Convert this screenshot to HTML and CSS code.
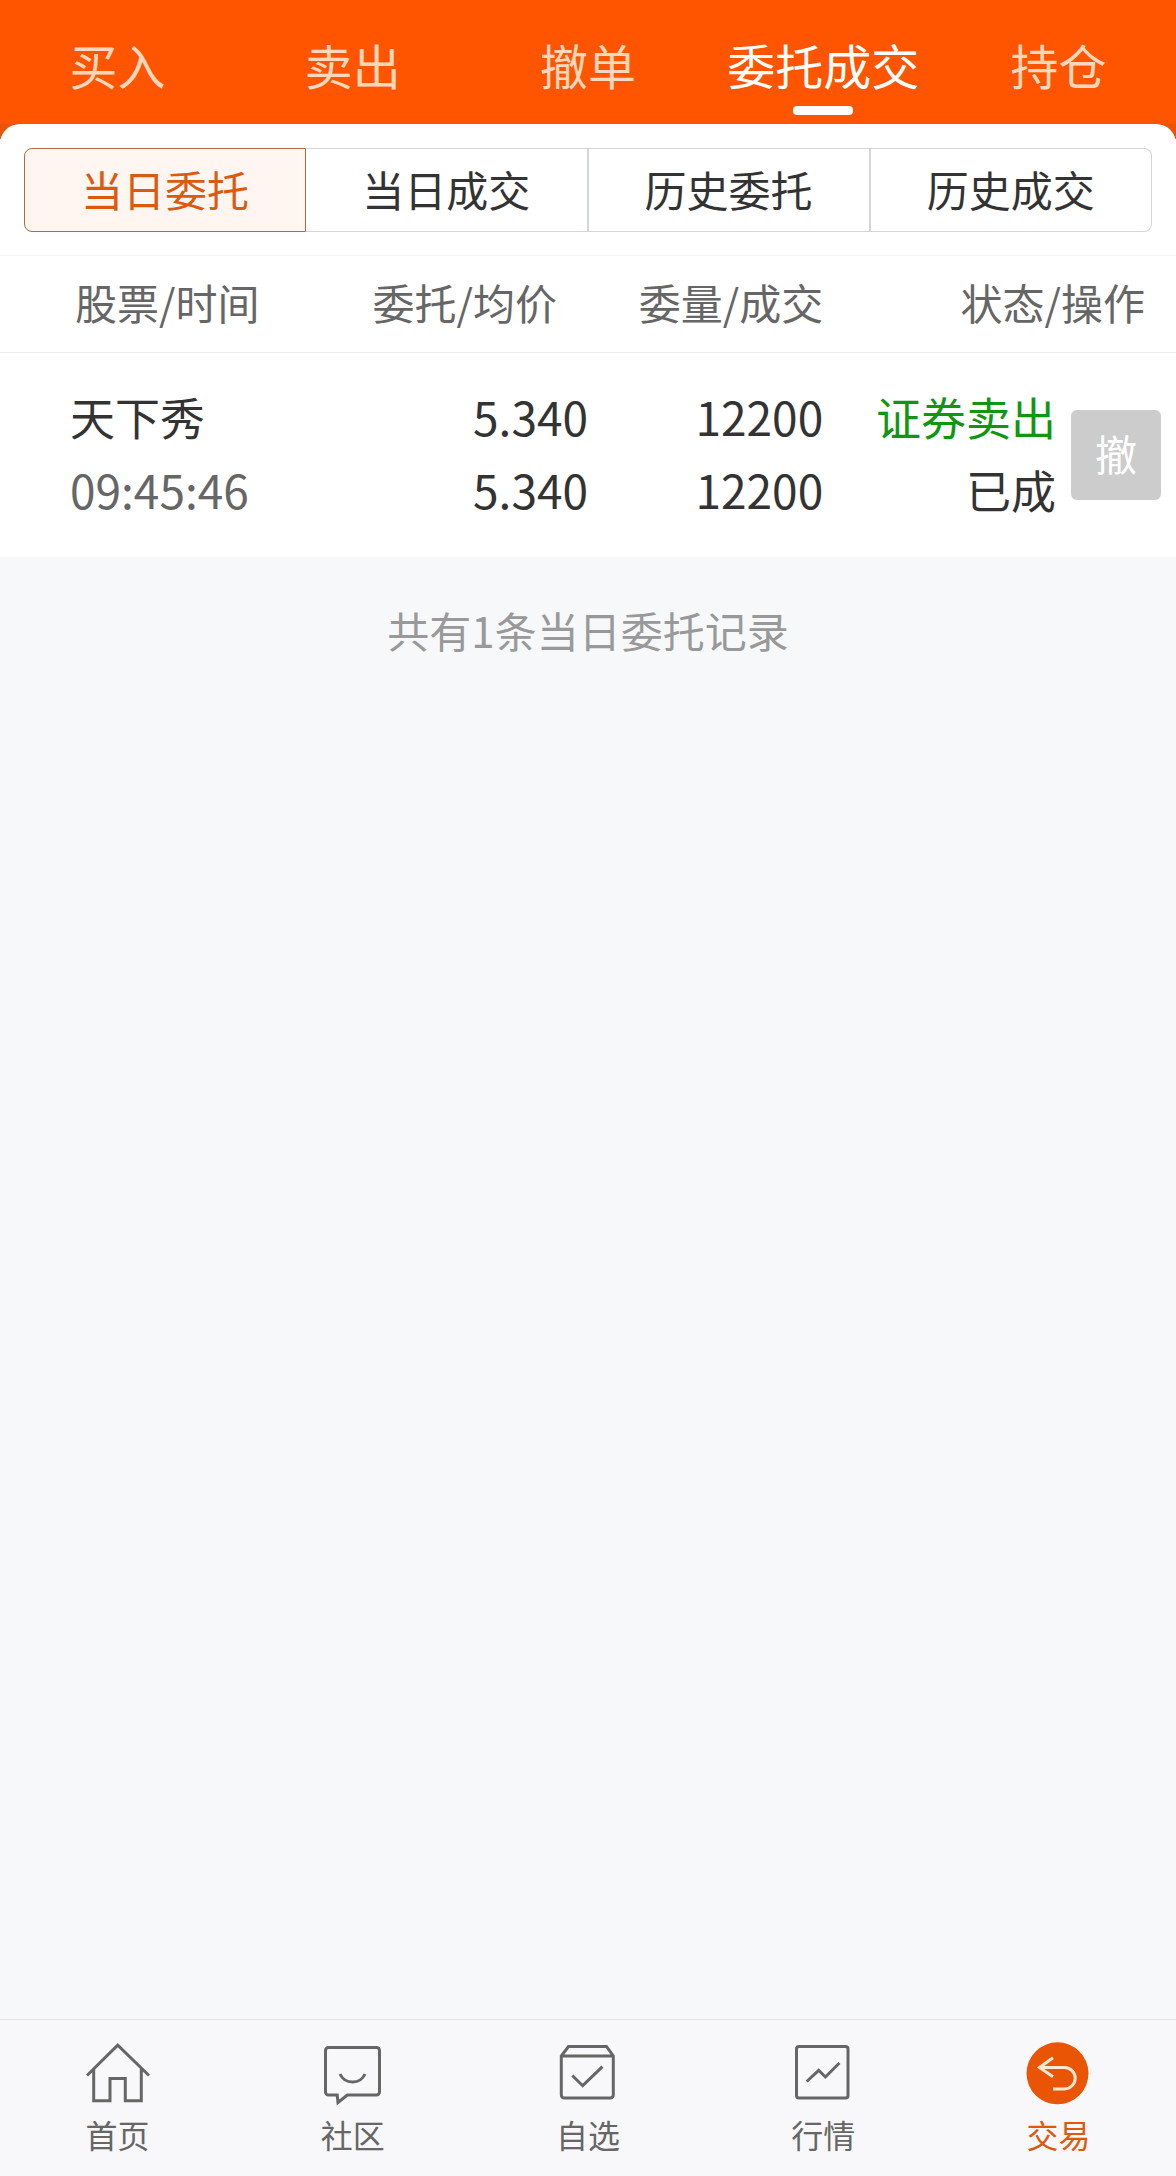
FILE: index.html
```html
<!DOCTYPE html>
<html lang="zh-CN">
<head>
<meta charset="utf-8">
<meta name="viewport" content="width=device-width, initial-scale=1">
<title>委托成交</title>
<link rel="stylesheet" href="styles.css">
</head>
<body>
<div class="app">
  <nav class="top-tabs">
    <a class="top-tab" href="#buy">买入</a>
    <a class="top-tab" href="#sell">卖出</a>
    <a class="top-tab" href="#cancel">撤单</a>
    <a class="top-tab is-active" href="#orders" aria-current="page">委托成交</a>
    <a class="top-tab" href="#positions">持仓</a>
  </nav>

  <main class="content">
    <div class="panel-wrap">
      <div class="segments">
        <button class="segment is-active" type="button">当日委托</button>
        <button class="segment" type="button">当日成交</button>
        <button class="segment" type="button">历史委托</button>
        <button class="segment" type="button">历史成交</button>
      </div>
    </div>

    <table class="orders">
      <colgroup>
        <col class="col-stock">
        <col class="col-price">
        <col class="col-amount">
        <col class="col-status">
        <col class="col-action">
      </colgroup>
      <thead>
        <tr>
          <th class="th-stock">股票/时间</th>
          <th class="th-price">委托/均价</th>
          <th>委量/成交</th>
          <th class="th-status" colspan="2">状态/操作</th>
        </tr>
      </thead>
      <tbody>
        <tr>
          <td class="td-stock"><div>天下秀</div><div class="num time">09:45:46</div></td>
          <td class="num"><div>5.340</div><div>5.340</div></td>
          <td class="num"><div>12200</div><div>12200</div></td>
          <td><div class="sell">证券卖出</div><div>已成</div></td>
          <td class="td-action"><button class="cancel" type="button">撤</button></td>
        </tr>
      </tbody>
    </table>

    <p class="summary">共有1条当日委托记录</p>
  </main>

  <nav class="bottom-nav">
    <a class="nav-item" href="#home">
      <svg class="icon" viewBox="0 0 64 64" aria-hidden="true">
        <path d="M1 33.5 31.7 3.2 63 33.5M7.7 27v31.7H24V36.5h15.3v22.2h16V27"/>
      </svg>
      <span>首页</span>
    </a>
    <a class="nav-item" href="#community">
      <svg class="icon" viewBox="0 0 64 64" aria-hidden="true">
        <path d="M7.5 5.5h48a3 3 0 0 1 3 3V50a3 3 0 0 1-3 3H26.3L17 60.5 16.2 53H7.5a3 3 0 0 1-3-3V8.5a3 3 0 0 1 3-3zM19 32c2.5 5.5 7.5 8 12.7 8S41.5 37.5 44 32"/>
      </svg>
      <span>社区</span>
    </a>
    <a class="nav-item" href="#watchlist">
      <svg class="icon" viewBox="0 0 64 64" aria-hidden="true">
        <path d="M5.3 14 12.5 4.5h38L57.3 14v39a3 3 0 0 1-3 3h-46a3 3 0 0 1-3-3zM5.3 14h52M16.3 33.5l10.400 10.200 19.800-19"/>
      </svg>
      <span>自选</span>
    </a>
    <a class="nav-item" href="#market">
      <svg class="icon" viewBox="0 0 64 64" aria-hidden="true">
        <rect x="5.5" y="4.5" width="51.5" height="51.5" rx="2.5"/>
        <path d="M15.7 39.5l12-11.2 6.700 6.700 14-14"/>
      </svg>
      <span>行情</span>
    </a>
    <a class="nav-item is-active" href="#trade" aria-current="page">
      <svg class="icon" viewBox="0 0 64 64" aria-hidden="true">
        <circle class="disc" cx="31.5" cy="31.3" r="31"/>
        <path class="arrow" d="M27 15.7 13.5 25.5 27 34.7M13.5 25.5H38.5a10.7 10.7 0 0 1 0 21.4H27"/>
      </svg>
      <span>交易</span>
    </a>
  </nav>
</div>
</body>
</html>
```

FILE: styles.css
```css
* {
  box-sizing: border-box;
}

body {
  margin: 0;
  background: #f7f8fa;
  color: #333;
  font-family: "Noto Sans CJK SC", sans-serif;
}

a {
  color: inherit;
  text-decoration: none;
}

button {
  font-family: inherit;
  padding: 0;
}

.app {
  display: flex;
  flex-direction: column;
  min-height: 100vh;
}

/* Top tabs */
.top-tabs {
  display: flex;
  height: 124px;
  background: #ff5500;
}

.top-tab {
  position: relative;
  flex: 1;
  padding-top: 28px;
  color: #ffd7bd;
  font-size: 48px;
  line-height: 72px;
  text-align: center;
  white-space: nowrap;
}

.top-tab.is-active {
  color: #fff;
}

.top-tab.is-active::after {
  content: "";
  position: absolute;
  left: 50%;
  bottom: 9px;
  width: 60px;
  height: 9px;
  margin-left: -30px;
  border-radius: 4px;
  background: #fff;
}

/* Segmented filter */
.content {
  flex: 1;
}

.panel-wrap {
  background: linear-gradient(#e8540a 15px, #fff 15px);
}

.segments {
  display: flex;
  padding: 24px 24px 23px;
  border-radius: 20px 20px 0 0;
  background: #fff;
}

.segment {
  flex: 1;
  height: 84px;
  padding-bottom: 3px;
  border: 1px solid #d3d6d8;
  border-right-width: 2px;
  border-left-width: 0;
  background: #fff;
  color: #333;
  font-size: 42px;
  line-height: 60px;
}

.segment:first-child {
  border-right-width: 1px;
  border-left-width: 1px;
  border-radius: 8px 0 0 8px;
}

.segment:last-child {
  border-right-width: 1px;
  border-radius: 0 8px 8px 0;
}

.segment.is-active {
  border-color: #b0683c;
  background: #fff6f2;
  color: #dc5a10;
}

/* Orders table */
.orders {
  width: 100%;
  table-layout: fixed;
  border-collapse: collapse;
  background: #fff;
}

.col-stock {
  width: 30%;
}

.col-price,
.col-amount {
  width: 20%;
}

.col-action {
  width: 120px;
}

.orders th {
  height: 97px;
  padding: 0 0 5px;
  border-top: 1px solid #f5f5f5;
  border-bottom: 1px solid #ececec;
  color: #666;
  font-size: 42px;
  font-weight: 400;
  line-height: 60px;
  text-align: right;
  white-space: nowrap;
}

.orders .th-stock {
  padding-left: 75px;
  text-align: left;
}

.orders .th-price,
.orders .th-status {
  padding-right: 31px;
}

.orders td {
  height: 204px;
  padding: 0 0 4px;
  font-size: 45px;
  line-height: 73px;
  text-align: right;
  white-space: nowrap;
}

.orders .num {
  font-size: 46px;
}

.orders .td-stock {
  padding-left: 70px;
  text-align: left;
}

.orders .td-action {
  padding: 0 15px 0 0;
}

.time {
  color: #666;
}

.sell {
  color: #129612;
}

.cancel {
  display: block;
  width: 90px;
  height: 90px;
  margin-left: auto;
  padding-bottom: 4px;
  border: 0;
  border-radius: 6px;
  background: #ccc;
  color: #fff;
  font-size: 42px;
  line-height: 60px;
}

.summary {
  margin: 42px 0;
  color: #999;
  font-size: 42px;
  line-height: 62px;
  text-align: center;
}

/* Bottom navigation */
.bottom-nav {
  display: flex;
  border-top: 1px solid #e3e4e6;
  background: #f8f8fa;
  color: #666;
}

.nav-item {
  display: flex;
  flex: 1;
  flex-direction: column;
  align-items: center;
  padding: 22px 0 18px;
  font-size: 32px;
  line-height: 48px;
}

.nav-item span {
  margin-top: 4px;
}

.icon {
  width: 64px;
  height: 64px;
  fill: none;
  stroke: #666;
  stroke-width: 3;
}

.nav-item.is-active {
  color: #dc5a10;
}

.disc {
  fill: #e95504;
  stroke: none;
}

.arrow {
  stroke: #ffe9d6;
}
```
